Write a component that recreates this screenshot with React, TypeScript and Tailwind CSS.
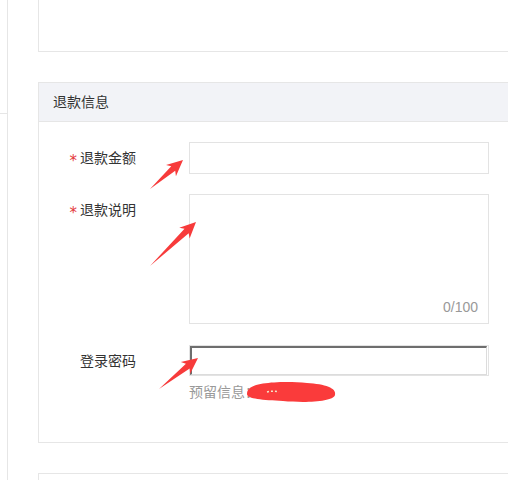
function arrowPoints(tx: number, ty: number, px: number, py: number) {
  const dx = px - tx;
  const dy = py - ty;
  const len = Math.sqrt(dx * dx + dy * dy);
  const ux = dx / len;
  const uy = dy / len;
  const nx = -uy;
  const ny = ux;
  const head = 14;
  const bx = px - ux * head;
  const by = py - uy * head;
  const shaft = 3;
  const barb = 7.5;
  const pts = [
    [tx, ty],
    [bx + nx * shaft + ux * 1, by + ny * shaft + uy * 1],
    [bx + nx * barb - ux * 2, by + ny * barb - uy * 2],
    [px, py],
    [bx - nx * barb - ux * 2, by - ny * barb - uy * 2],
    [bx - nx * shaft + ux * 1, by - ny * shaft + uy * 1],
  ];
  return pts.map((p) => p.join(",")).join(" ");
}

const arrows = [
  [150, 189, 183, 160],
  [150, 266, 196, 222],
  [159, 389, 198, 358],
];

function Label({ text, required }: { text: string; required?: boolean }) {
  return (
    <div className="w-[97px] shrink-0 h-[32px] leading-[32px] text-right text-[14px] text-[#333]">
      {required && (
        <span className="relative top-[3px] font-['DejaVu_Sans',sans-serif] text-[15px] text-[#e4393c] mr-[3px]">*</span>
      )}
      {text}
    </div>
  );
}

export default function App() {
  return (
    <div className="relative w-[508px] h-[480px] overflow-hidden bg-white flex font-['Liberation_Sans','Noto_Sans_CJK_SC',sans-serif]">
      <div className="w-[8px] shrink-0 border-r border-[#e6e6e6]">
        <div className="h-[114px] border-b border-[#e6e6e6]" />
      </div>

      <div className="flex-1 pl-[30px]">
        <div className="h-[52px] border-l border-b border-[#e6e6e6]" />

        <div className="mt-[30px] border-l border-t border-b border-[#e6e6e6]">
          <div className="h-[39px] bg-[#f2f3f7] border-b border-[#e6e6e6] pl-[14px] flex items-center text-[14px] text-[#333]">
            退款信息
          </div>

          <div className="pt-[20px] pb-[40px]">
            <div className="flex">
              <Label text="退款金额" required />
              <input className="ml-[53px] w-[300px] h-[32px] border border-[#e3e3e3] outline-none" />
            </div>

            <div className="flex mt-[20px]">
              <Label text="退款说明" required />
              <div className="relative ml-[53px] w-[300px] h-[130px] border border-[#e3e3e3]">
                <span className="absolute right-[10px] bottom-[5px] text-[14px] text-[#999]">0/100</span>
              </div>
            </div>

            <div className="flex mt-[21px]">
              <Label text="登录密码" />
              <div className="ml-[53px] w-[300px]">
                <div className="h-[31px] border border-[#e3e3e3] flex">
                  <div className="flex-1 border-t-2 border-l-2 border-r border-b border-t-[#6e6e6e] border-l-[#6e6e6e] border-r-[#dcdcdc] border-b-[#dcdcdc] mr-[1px]" />
                </div>
                <div className="mt-[6px] h-[20px] leading-[20px] text-[14px] text-[#999] flex items-center">
                  <span>预留信息：</span>
                  <svg width="92" height="22" viewBox="0 0 92 22" className="-ml-[14px]">
                    <path
                      d="M4 8 C10 1 40 0 62 2 C80 3 92 7 90 14 C88 21 60 22 38 20 C18 19 2 18 2 13 C2 10 3 9 4 8 Z"
                      fill="#fa3b3b"
                    />
                    <path d="M22 11 C26 10 30 10 34 11" stroke="#f3e6c8" strokeWidth="1.5" fill="none" strokeDasharray="2 2" />
                  </svg>
                </div>
              </div>
            </div>
          </div>
        </div>

        <div className="mt-[30px] h-[20px] border-l border-t border-[#e6e6e6]" />
      </div>

      <svg className="absolute inset-0 pointer-events-none" width="508" height="480">
        {arrows.map(([tx, ty, px, py], i) => (
          <polygon key={i} points={arrowPoints(tx, ty, px, py)} fill="#f73b3b" />
        ))}
      </svg>
    </div>
  );
}
